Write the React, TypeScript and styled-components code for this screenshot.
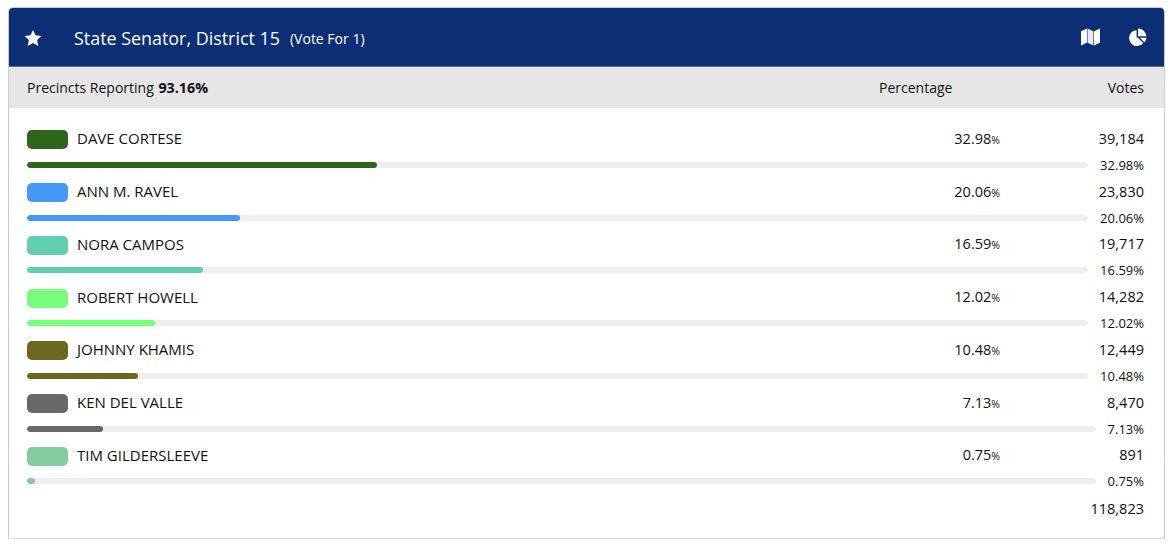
import styled, { createGlobalStyle } from "styled-components";

const GlobalStyle = createGlobalStyle`
  html, body {
    margin: 0;
    padding: 0;
    background: #fff;
    font-family: "Open Sans", "Noto Sans", sans-serif;
    color: #111;
  }
`;

const Page = styled.div`
  width: 1170px;
  height: 544px;
  overflow: hidden;
  padding: 7px 5px 0 8px;
  box-sizing: border-box;
`;

const Panel = styled.section`
  border: 1px solid #cccccc;
  border-bottom-color: #dcdcdc;
  border-radius: 5px 5px 0 0;
  height: 532px;
  box-sizing: border-box;
`;

const Header = styled.header`
  height: 59px;
  padding: 2px 17px 0 15px;
  background: #0b2e75;
  border-radius: 4px 4px 0 0;
  border-bottom: 1px solid #5a6f9e;
  box-sizing: border-box;
  display: flex;
  align-items: center;
  color: #fff;
`;

const Title = styled.h1`
  margin: 0 0 0 32px;
  font-size: 17.9px;
  font-weight: 400;
`;

const VoteFor = styled.span`
  margin-left: 10px;
  font-size: 14px;
`;

const HeaderIcons = styled.div`
  margin-left: auto;
  display: flex;
  align-items: center;
  gap: 29px;
  margin-top: -2px;
`;

const SubBar = styled.div`
  height: 41px;
  padding: 0 20px 0 18px;
  background: #e6e6e6;
  display: flex;
  align-items: center;
  font-size: 14px;
`;

const Reporting = styled.div`
  flex: 1;
  b {
    font-weight: 700;
    margin-left: 1px;
    font-size: 14.3px;
  }
`;

const PercentHead = styled.div`
  width: 73px;
`;

const VotesHead = styled.div`
  width: 192px;
  text-align: right;
`;

const Rows = styled.div`
  padding: 13px 20px 0 18px;
`;

const Row = styled.div`
  height: 52.75px;
  display: flex;
  flex-direction: column;
`;

const TopLine = styled.div`
  height: 36px;
  display: flex;
  align-items: center;
  justify-content: space-between;
`;

const Candidate = styled.div`
  display: flex;
  align-items: center;
  gap: 9px;
  font-size: 15px;
`;

const Swatch = styled.span<{ $color: string }>`
  width: 41px;
  height: 19px;
  margin-top: 3px;
  border-radius: 5px;
  background: ${(p) => p.$color};
`;

const Numbers = styled.div`
  display: flex;
  align-items: center;
`;

const Percent = styled.div`
  font-size: 14.5px;
  small {
    font-size: 10.5px;
  }
`;

const VoteCount = styled.div`
  width: 144px;
  text-align: right;
  font-size: 14.5px;
  font-weight: 500;
`;

const BarLine = styled.div`
  display: flex;
  align-items: center;
  gap: 12px;
  font-size: 13px;
`;

const Track = styled.div`
  flex: 1;
  height: 6px;
  border-radius: 3px;
  background: #eeeeee;
  overflow: hidden;
`;

const Fill = styled.div<{ $color: string }>`
  height: 100%;
  border-radius: 3px;
  background: ${(p) => p.$color};
`;

const Total = styled.div`
  text-align: right;
  padding: 0 20px;
  margin-top: 9px;
  font-size: 14.5px;
  font-weight: 500;
`;

const candidates = [
  { name: "DAVE CORTESE", color: "#2f651b", pct: "32.98", votes: "39,184" },
  { name: "ANN M. RAVEL", color: "#4499f7", pct: "20.06", votes: "23,830" },
  { name: "NORA CAMPOS", color: "#5fcfb0", pct: "16.59", votes: "19,717" },
  { name: "ROBERT HOWELL", color: "#79fd7b", pct: "12.02", votes: "14,282" },
  { name: "JOHNNY KHAMIS", color: "#6b671d", pct: "10.48", votes: "12,449" },
  { name: "KEN DEL VALLE", color: "#686868", pct: "7.13", votes: "8,470" },
  { name: "TIM GILDERSLEEVE", color: "#83cc9e", pct: "0.75", votes: "891" },
];

function StarIcon() {
  return (
    <svg width="18" height="18" viewBox="0 0 24 24" fill="#fff">
      <path d="M12 1.2l3.4 7.2 7.8 1-5.7 5.4 1.5 7.8-7-3.8-7 3.8 1.5-7.8L.8 9.4l7.8-1z" />
    </svg>
  );
}

function MapIcon() {
  return (
    <svg width="19" height="18" viewBox="0 0 19 18" fill="#fff">
      <path d="M0 3.2L5.9 .5v14.3L0 17.5z" />
      <path d="M6.5 .5l5.9 2.7v14.3l-5.9-2.7z" opacity="0.9" />
      <path d="M13 3.2L19 .5v14.3L13 17.5z" />
    </svg>
  );
}

function PieIcon() {
  return (
    <svg width="18" height="18" viewBox="0 0 18 18" fill="#fff">
      <path d="M7.6 2.2A7.9 7.9 0 1 0 14.2 15L8.6 9.6H7.6z" />
      <path d="M9 .6a8.4 8.4 0 0 1 8.4 7.7H9z" />
      <path d="M10.8 9.7h6.8a8 8 0 0 1-2.2 4.5z" />
    </svg>
  );
}

export default function App() {
  return (
    <Page>
      <GlobalStyle />
      <Panel>
        <Header>
          <StarIcon />
          <Title>State Senator, District 15</Title>
          <VoteFor>(Vote For 1)</VoteFor>
          <HeaderIcons>
            <MapIcon />
            <PieIcon />
          </HeaderIcons>
        </Header>
        <SubBar>
          <Reporting>
            Precincts Reporting <b>93.16%</b>
          </Reporting>
          <PercentHead>Percentage</PercentHead>
          <VotesHead>Votes</VotesHead>
        </SubBar>
        <Rows>
          {candidates.map((c) => (
            <Row key={c.name}>
              <TopLine>
                <Candidate>
                  <Swatch $color={c.color} />
                  {c.name}
                </Candidate>
                <Numbers>
                  <Percent>
                    {c.pct}
                    <small>%</small>
                  </Percent>
                  <VoteCount>{c.votes}</VoteCount>
                </Numbers>
              </TopLine>
              <BarLine>
                <Track>
                  <Fill $color={c.color} style={{ width: `${c.pct}%` }} />
                </Track>
                {c.pct}%
              </BarLine>
            </Row>
          ))}
        </Rows>
        <Total>118,823</Total>
      </Panel>
    </Page>
  );
}
